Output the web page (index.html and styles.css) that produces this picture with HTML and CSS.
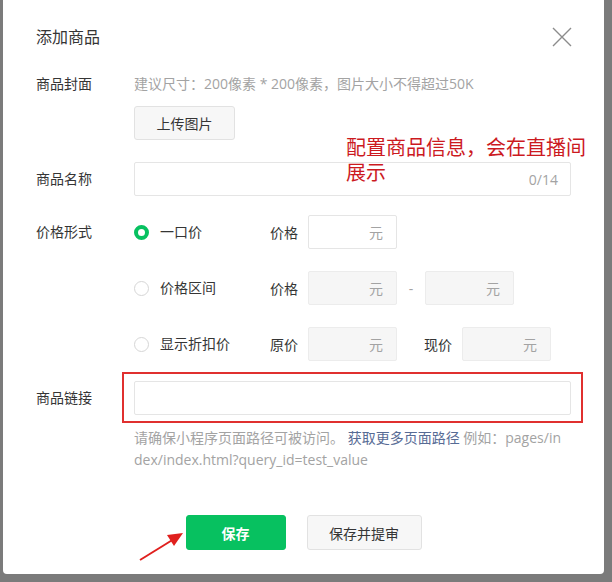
FILE: index.html
```html
<!DOCTYPE html>
<html lang="zh-CN">
<head>
  <meta charset="UTF-8">
  <title>添加商品</title>
  <link rel="stylesheet" href="styles.css">
</head>
<body>
  <div class="mask">
    <div class="dialog">
      <div class="dialog-hd">
        <h3 class="dialog-title">添加商品</h3>
        <span class="dialog-close">
          <svg width="20" height="20" viewBox="0 0 20 20"><path d="M1 1L19 19M19 1L1 19" stroke="#8c8c8c" stroke-width="1.4" fill="none"/></svg>
        </span>
      </div>

      <div class="dialog-bd">
        <div class="row row-cover">
          <div class="row-label">商品封面</div>
          <div class="row-ctrl">
            <p class="tips">建议尺寸：200像素 * 200像素，图片大小不得超过50K</p>
            <button class="btn btn-default btn-upload">上传图片</button>
          </div>
        </div>

        <div class="row row-name">
          <div class="row-label">商品名称</div>
          <div class="row-ctrl">
            <div class="input input-full">
              <span class="counter">0/14</span>
            </div>
          </div>
        </div>

        <div class="row row-price">
          <div class="row-label">价格形式</div>
          <div class="row-ctrl options">
            <div class="opt-line">
              <label class="radio"><i class="radio-dot checked"></i>一口价</label>
              <span class="plabel">价格</span>
              <div class="input input-price"><span class="unit">元</span></div>
            </div>
            <div class="opt-line">
              <label class="radio"><i class="radio-dot"></i>价格区间</label>
              <span class="plabel">价格</span>
              <div class="input input-price disabled"><span class="unit">元</span></div>
              <span class="dash">-</span>
              <div class="input input-price disabled"><span class="unit">元</span></div>
            </div>
            <div class="opt-line">
              <label class="radio"><i class="radio-dot"></i>显示折扣价</label>
              <span class="plabel">原价</span>
              <div class="input input-price disabled"><span class="unit">元</span></div>
              <span class="plabel plabel-now">现价</span>
              <div class="input input-price disabled"><span class="unit">元</span></div>
            </div>
          </div>
        </div>

        <div class="row row-link">
          <div class="row-label">商品链接</div>
          <div class="row-ctrl">
            <div class="link-wrap">
              <div class="input input-full"></div>
              <div class="mark-box"></div>
            </div>
            <p class="tips tips-link">请确保小程序页面路径可被访问。 <a class="link">获取更多页面路径</a> 例如：pages/index/index.html?query_id=test_value</p>
          </div>
        </div>
      </div>

      <div class="dialog-ft">
        <button class="btn btn-primary">保存</button>
        <button class="btn btn-default btn-submit">保存并提审</button>
      </div>

      <div class="note">配置商品信息，会在直播间<br>展示</div>
      <svg class="arrow" width="60" height="40" viewBox="0 0 60 40">
        <path d="M4 36L38 15" stroke="#e0201e" stroke-width="2" fill="none"/>
        <path d="M47 9L31 11L38 22Z" fill="#e0201e"/>
      </svg>
    </div>
  </div>
</body>
</html>
```

FILE: styles.css
```css
body {
  margin: 0;
  background: #7b7b7b;
  font-family: "Open Sans", "Noto Sans CJK SC", sans-serif;
  color: #353535;
}
.mask {
  width: 612px;
  height: 582px;
  overflow: hidden;
}
.dialog {
  position: relative;
  margin-left: 3px;
  width: 601px;
  height: 574px;
  background: #fff;
  border-radius: 0 0 4px 4px;
}
.dialog-hd {
  height: 74px;
  padding: 0 32px 0 33px;
  display: flex;
  align-items: center;
  justify-content: space-between;
}
.dialog-title {
  margin: 0;
  font-size: 16px;
  font-weight: normal;
  line-height: 20px;
}
.dialog-close {
  display: flex;
}
.dialog-bd {
  padding: 0 32px 0 33px;
}
.row {
  display: grid;
  grid-template-columns: 98px 1fr;
}
.row-label {
  font-size: 14px;
  line-height: 20px;
}
.row-name,
.row-link {
  align-items: start;
}
.row-name .row-label,
.row-price .row-label,
.row-link .row-label {
  line-height: 34px;
}
.row-name {
  margin-top: 22px;
}
.row-price {
  margin-top: 19px;
}
.row-link {
  margin-top: 20px;
}
.tips {
  margin: 0;
  font-size: 14px;
  line-height: 20px;
  color: #a3a3a3;
}
.tips-link {
  margin-top: 12px;
  width: 432px;
  line-height: 22px;
  word-break: break-all;
}
.link {
  color: #576b95;
}
.btn {
  font-family: inherit;
  font-size: 14px;
  height: 35px;
  border-radius: 3px;
  cursor: pointer;
}
.btn-default {
  background: #f7f7f7;
  border: 1px solid #e2e2e2;
  color: #353535;
}
.btn-primary {
  background: #07c160;
  border: 1px solid #07c160;
  color: #fff;
  font-weight: bold;
  width: 100px;
}
.btn-upload {
  margin-top: 12px;
  height: 34px;
  width: 101px;
  display: block;
}
.btn-submit {
  width: 115px;
}
.input {
  box-sizing: border-box;
  height: 34px;
  border: 1px solid #e5e5e5;
  border-radius: 2px;
  background: #fff;
  display: flex;
  align-items: center;
  justify-content: flex-end;
  font-size: 14px;
  color: #a3a3a3;
}
.input-full {
  width: 437px;
  padding-right: 12px;
}
.input-price {
  width: 89px;
  padding-right: 13px;
}
.input.disabled {
  background: #f6f6f6;
  border-color: #ececec;
}
.options {
  display: flex;
  flex-direction: column;
  gap: 22px;
}
.opt-line {
  display: flex;
  align-items: center;
  font-size: 14px;
}
.radio {
  width: 136px;
  display: flex;
  align-items: center;
  gap: 11px;
  line-height: 20px;
}
.radio-dot {
  box-sizing: border-box;
  width: 15px;
  height: 15px;
  border-radius: 50%;
  border: 1px solid #d6d6d6;
  background: #fff;
}
.radio-dot.checked {
  border: 4px solid #07c160;
}
.plabel {
  width: 38px;
}
.plabel-now {
  margin-left: 27px;
}
.dash {
  width: 28px;
  text-align: center;
  color: #a3a3a3;
}
.link-wrap {
  position: relative;
}
.mark-box {
  position: absolute;
  top: -9px;
  left: -12px;
  width: 461px;
  bottom: -8px;
  border: 2px solid #e0302f;
  box-sizing: border-box;
}
.dialog-ft {
  margin-top: 44px;
  display: flex;
  justify-content: center;
  gap: 21px;
}
.note {
  position: absolute;
  left: 343px;
  top: 135px;
  font-size: 20px;
  line-height: 25px;
  color: #cc1a1f;
}
.arrow {
  position: absolute;
  left: 133px;
  top: 524px;
}
```
